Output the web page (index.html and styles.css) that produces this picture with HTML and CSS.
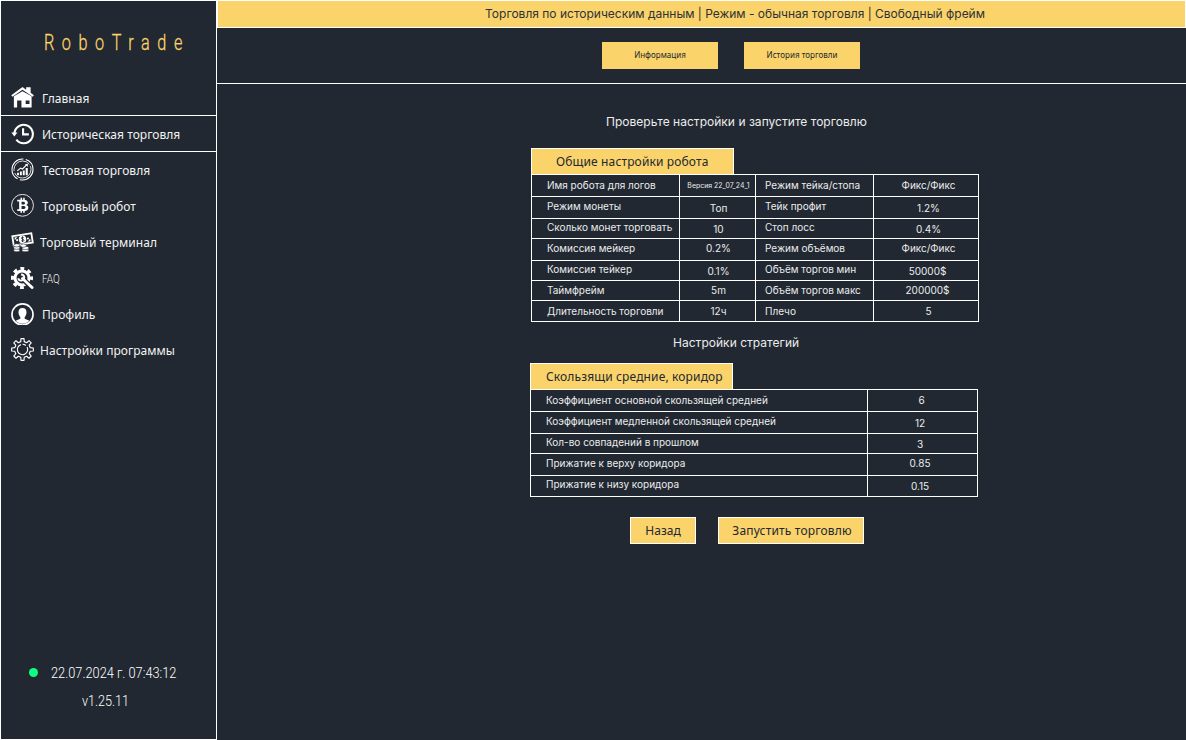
FILE: index.html
```html
<!DOCTYPE html>
<html lang="ru">
<head>
<meta charset="utf-8">
<title>RoboTrade</title>
<link rel="stylesheet" href="styles.css">
</head>
<body>
<div class="app">
  <aside class="sidebar">
    <div class="logo"><span class="logo-text">RoboTrade</span></div>
    <nav class="menu">
      <a class="item"><svg class="icon" viewBox="0 0 24 24"><path fill="#fff" d="M12 1 0.3 9.700l1.200 1.600L12 4l10.700 7.300 1.200-1.600-3.400-2.600V1.200h-4.700V3.800z"/><path fill="#fff" fill-rule="evenodd" d="M12 5.400 3 10.700V22.500h3.400V15h4.500v7.500H21.500V10.700zM15.300 15h4v3.800h-4z"/></svg><span class="t">Главная</span></a>
      <a class="item active"><svg class="icon" viewBox="0 0 24 24"><path fill="none" stroke="#fff" stroke-width="2.200" d="M3.600 12.500A9.600 9.600 0 1 1 5.600 18.400"/><path fill="#fff" d="M0.300 11h6.400L3.500 15z"/><path fill="none" stroke="#fff" stroke-width="2.200" d="M12.600 6.500v6.400h6"/></svg><span class="t">Историческая торговля</span></a>
      <a class="item"><svg class="icon" viewBox="0 0 24 24"><g fill="none" stroke="#fff"><circle cx="12" cy="12" r="11" stroke-width="1.100" stroke-dasharray="20 2.500 30 2.500"/><circle cx="12" cy="12" r="8.900" stroke-width=".9" stroke-dasharray="24 2"/><path stroke-width="1.200" d="M6.500 13.500 10 10.500l2 1L16.500 7"/></g><path fill="#fff" d="M14.500 6.300h3v3zM6.300 15.500h2V18h-2zM9.300 14h2v4h-2zM12.300 13h2v5h-2zM15.300 10.500h2.200V18h-2.200z"/></svg><span class="t">Тестовая торговля</span></a>
      <a class="item"><svg class="icon" viewBox="0 0 24 24"><circle cx="12" cy="11.800" r="11.400" fill="none" stroke="#fff" stroke-width=".9"/><path fill="none" stroke="#fff" stroke-width="1.600" d="M10.700 4v3.500M13.500 4v3.500M10.700 16v3.500M13.500 16v3.500"/><path fill="#fff" fill-rule="evenodd" d="M6.500 6h7.200c4.400 0 5 4.400 2.100 5.500 3.700 1 2.900 6.200-1.800 6.200H6.500v-1.900h2V7.900h-2zM11 8v3h2c2.100 0 2.100-3 0-3zm0 4.500v3.100h2.500c2.200 0 2.200-3.100 0-3.100z"/></svg><span class="t">Торговый робот</span></a>
      <a class="item"><svg class="icon" viewBox="0 0 24 24"><g transform="translate(0 1.500) rotate(-9 12 8)"><path fill="#fff" fill-rule="evenodd" d="M1 2.500h22v11.500h-22zM2.900 4.300v7.900h18.200V4.300z"/><circle cx="12" cy="8.200" r="3.900" fill="#fff"/><path fill="#fff" d="M4 5h3L4 8zM20 11.500h-3l3-3z"/><circle cx="6.300" cy="8.200" r="1.100" fill="#fff"/><circle cx="17.700" cy="8.200" r="1.100" fill="#fff"/></g><path fill="none" stroke="#222831" stroke-width=".9" d="M13.400 8.200c-1-1-2.700-.6-2.500.5.200 1.200 2.600.7 2.700 2 0 1.100-1.700 1.500-2.800.4M12 6.700v6"/><g fill="#fff" stroke="#222831" stroke-width=".6"><ellipse cx="6" cy="21" rx="3.200" ry="1.700"/><ellipse cx="6" cy="18.500" rx="3.200" ry="1.700"/><ellipse cx="6" cy="16" rx="3.200" ry="1.700"/><ellipse cx="15" cy="21" rx="3.600" ry="1.700"/><ellipse cx="15" cy="18.700" rx="3.600" ry="1.700"/><ellipse cx="12.800" cy="16.300" rx="3.200" ry="1.700"/></g></svg><span class="t near">Торговый терминал</span></a>
      <a class="item"><svg class="icon" viewBox="0 0 24 24"><circle cx="11.500" cy="12.500" r="7.300" fill="none" stroke="#fff" stroke-width="3.200"/><circle cx="11.500" cy="12.500" r="9.900" fill="none" stroke="#fff" stroke-width="3.200" stroke-dasharray="4 3.775" stroke-dashoffset="2"/><path fill="none" stroke="#222831" stroke-width="5.600" d="M12 13l11 11"/><path fill="none" stroke="#fff" stroke-width="3" stroke-linecap="round" d="M12 13l10 9.500"/><path fill="none" stroke="#fff" stroke-width="2" d="M10.500 8.800a3.200 3.200 0 1 1-3 4"/></svg><span class="faq">FAQ</span></a>
      <a class="item"><svg class="icon" viewBox="0 0 24 24"><circle cx="12" cy="13" r="11" fill="none" stroke="#fff" stroke-width="1.700"/><path fill="#fff" d="M12 6.300c3 0 4.300 2 4.200 4.600-.1 2-.9 3.700-1.900 4.800v1.700l4.900 2.100c-4 4.200-10.400 4.200-14.400 0l4.900-2.100v-1.700c-1-1.100-1.800-2.800-1.900-4.800-.1-2.600 1.200-4.600 4.200-4.600z"/></svg><span class="t">Профиль</span></a>
      <a class="item"><svg class="icon" viewBox="0 0 24 24"><path fill="none" stroke="#fff" stroke-width="1.200" stroke-linejoin="round" d="M10.200 3.800 10.400.7h3.200l.2 3.100 2.600 1.100 2.400-2.100 2.300 2.300-2.100 2.400 1.100 2.600 3.200.3v3.200l-3.200.2-1.100 2.600 2.100 2.400-2.300 2.300-2.400-2.100-2.600 1.100-.2 3.200h-3.200l-.2-3.200-2.600-1.100-2.400 2.100-2.300-2.300L5 16.400l-1.100-2.600-3.200-.2v-3.200l3.200-.3L5 7.500 2.900 5.100l2.300-2.300 2.400 2.100z"/><path fill="none" stroke="#fff" stroke-width="1.200" d="M16.800 9.500a5.400 5.400 0 1 1-6.500-2.600M12 6.500a5.400 5.400 0 0 1 3.500 1.300"/></svg><span class="t near">Настройки программы</span></a>
    </nav>
    <footer class="status">
      <div class="clock"><i class="dot"></i><span class="date">22.07.2024 г. 07:43:12</span></div>
      <div class="version"><span class="ver">v1.25.11</span></div>
    </footer>
  </aside>
  <main class="main">
    <header class="title"><span>Торговля по историческим данным | Режим - обычная торговля | Свободный фрейм</span></header>
    <div class="tabs"><button class="tab"><span>Информация</span></button><button class="tab"><span>История торговли</span></button></div>
    <section class="content">
      <h2 class="lead">Проверьте настройки и запустите торговлю</h2>
      <div class="panel">
        <div class="panel-head"><span>Общие настройки робота</span></div>
        <div class="grid general">
          <div class="k">Имя робота для логов</div><div class="v tiny">Версия 22_07_24_1</div><div class="k2">Режим тейка/стопа</div><div class="v r">Фикс/Фикс</div>
          <div class="k up">Режим монеты</div><div class="v down">Топ</div><div class="k2 up">Тейк профит</div><div class="v r down">1.2%</div>
          <div class="k up">Сколько монет торговать</div><div class="v down">10</div><div class="k2 up">Стоп лосс</div><div class="v r down">0.4%</div>
          <div class="k up">Комиссия мейкер</div><div class="v up">0.2%</div><div class="k2 up">Режим объёмов</div><div class="v r up">Фикс/Фикс</div>
          <div class="k up">Комиссия тейкер</div><div class="v down">0.1%</div><div class="k2 up">Объём торгов мин</div><div class="v l down">50000$</div>
          <div class="k">Таймфрейм</div><div class="v">5m</div><div class="k2">Объём торгов макс</div><div class="v l">200000$</div>
          <div class="k last">Длительность торговли</div><div class="v last">12ч</div><div class="k2 last">Плечо</div><div class="v r last">5</div>
        </div>
      </div>
      <h2 class="strategies">Настройки стратегий</h2>
      <div class="panel second">
        <div class="panel-head"><span>Скользящи средние, коридор</span></div>
        <div class="grid strategy">
          <div class="k">Коэффициент основной скользящей средней</div><div class="v s1">6</div>
          <div class="k up">Коэффициент медленной скользящей средней</div><div class="v s2 down">12</div>
          <div class="k up">Кол-во совпадений в прошлом</div><div class="v s2 down">3</div>
          <div class="k up">Прижатие к верху коридора</div><div class="v s2 up">0.85</div>
          <div class="k up">Прижатие к низу коридора</div><div class="v s2 down">0.15</div>
        </div>
      </div>
      <div class="actions"><button class="btn back"><span>Назад</span></button><button class="btn start"><span>Запустить торговлю</span></button></div>
    </section>
  </main>
</div>
</body>
</html>
```
FILE: styles.css
```css
* { box-sizing: border-box; }
body { margin: 0; background: #222831; color: #ebeced; font-family: Inter, "Noto Sans", sans-serif; }
.app { display: flex; width: 1186px; height: 740px; overflow: hidden; }
.sidebar { width: 217px; border: 1px solid #fff; display: flex; flex-direction: column; font: 12px/18px "Noto Sans", sans-serif; }
.logo { height: 79px; padding: 27px 0 0 43px; color: #fbd36b; }
.logo-text { display: inline-block; font: 300 21.500px/30px Roboto, sans-serif; letter-spacing: 10px; transform: scaleX(.755); transform-origin: left; white-space: nowrap; -webkit-text-stroke: .3px #fbd36b; }
.menu { display: flex; flex-direction: column; }
.item { height: 36px; display: flex; align-items: center; gap: 8px; padding-left: 10px; white-space: nowrap; border-bottom: 1px solid transparent; }
.item:first-child, .item.active { border-color: #fff; }
.icon { width: 23px; height: 23px; flex: none; }
.t { padding-top: 2px; letter-spacing: .03px; color: #f2f3f3; }
.near { margin-left: -2px; }
.faq { padding-top: 2px; font: 300 13px/18px Roboto, sans-serif; transform: scaleX(.77); transform-origin: left; }
.status { margin-top: auto; height: 76px; font: 300 14px/20px Roboto, sans-serif; color: #fff; }
.clock { display: flex; align-items: center; padding-left: 28px; height: 20px; gap: 13px; }
.dot { width: 9px; height: 9px; border-radius: 50%; background: #0cff80; margin-bottom: 2px; }
.date, .ver { display: inline-block; white-space: nowrap; transform: scaleX(.913); transform-origin: left; }
.ver { transform: scaleX(.9); }
.version { padding: 8px 0 0 81px; }
.main { flex: 1; display: flex; flex-direction: column; }
.title { height: 28px; border: 1px solid #fff; background: #fbd36b; color: #2e3235; display: flex; justify-content: center; align-items: center; padding: 0 0 2px 67px; font-size: 12px; white-space: nowrap; }
.tabs { height: 56px; border-bottom: 1px solid #fff; display: flex; gap: 26px; padding: 14px 0 0 385px; }
.tab { width: 116px; height: 27px; border: 0; padding: 0 0 2px; background: #fbd36b; color: #222831; font: 8px/12px "Noto Sans", sans-serif; letter-spacing: .02px; }
.content { padding-left: 313px; }
h2 { margin: 0; font-weight: 400; font-size: 12px; line-height: 20px; letter-spacing: .025px; white-space: nowrap; }
.lead { padding: 28px 0 0 76px; height: 64px; }
.panel { margin-left: 1px; width: 448px; }
.panel-head { width: 203px; height: 26px; border: 1px solid #fff; border-bottom: 0; background: #fbd36b; color: #222831; font: 12px/26px "Noto Sans", sans-serif; letter-spacing: .14px; white-space: nowrap; padding-left: 24px; }
.grid { display: grid; gap: 1px; padding: 1px; background: #fff; font-size: 10px; line-height: 14px; }
.general { grid-template: 21px 21px 19px 21px 19px 19px 20px / 147px 75px 117px 104px; }
.strategy { grid-template: 21px 21px 19px 21px 20px / 336px 109px; }
.grid > div { background: #222831; display: flex; align-items: center; white-space: nowrap; padding-bottom: 2px; }
.k { padding-left: 15px; }
.k2 { padding-left: 9px; }
.grid > .v { justify-content: center; }
.v { padding-left: 2px; }
.r { padding-left: 5px; }
.l { padding-left: 3px; }
.grid > .up { padding-bottom: 4px; }
.grid > .down { padding-bottom: 0; }
.grid > .last { padding-bottom: 1px; }
.grid > .tiny { font-size: 6.900px; padding-bottom: 0; letter-spacing: .04px; }
.s1 { padding: 0 2px 0 0; }
.s2 { padding: 0 5px 0 0; }
.strategies { padding: 11px 0 0 143px; height: 41px; }
.second { margin-left: 0; }
.second .panel-head { padding-left: 15px; }
.actions { display: flex; gap: 22px; padding: 20px 0 0 100px; }
.btn { height: 27px; padding: 0; border: 1px solid #fff; background: #fbd36b; color: #222831; font: 12px/20px "Noto Sans", sans-serif; white-space: nowrap; }
.back { width: 66px; }
.start { width: 146px; padding-left: 2px; letter-spacing: .17px; }
```
